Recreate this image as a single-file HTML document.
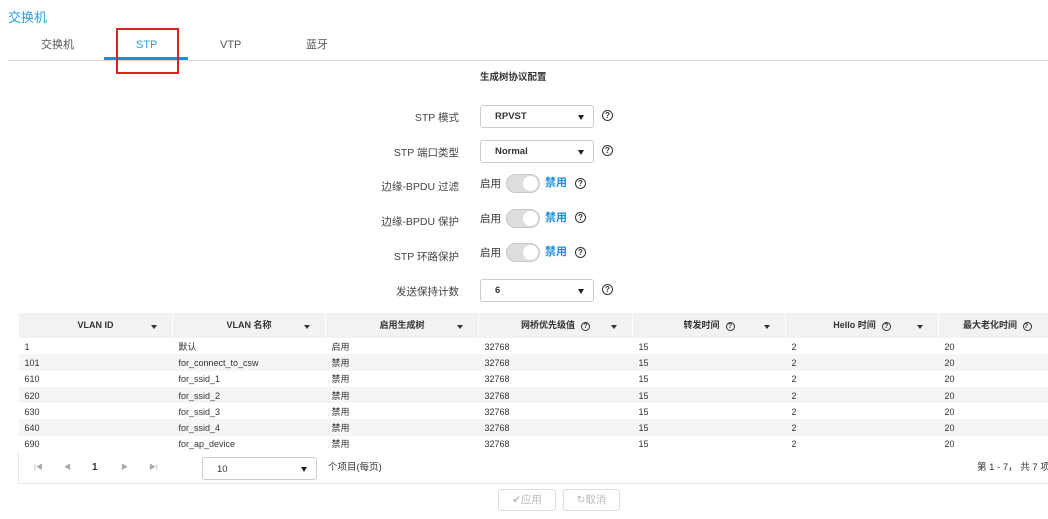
<!DOCTYPE html>
<html><head><meta charset="utf-8"><style>
*{margin:0;padding:0;box-sizing:border-box}
body{width:1048px;height:519px;overflow:hidden;background:#fff;font-family:"Liberation Sans","Noto Sans CJK SC",sans-serif;font-size:11px;line-height:1.2;color:#333;position:relative}
.a{position:absolute;white-space:nowrap}
.title{left:8px;top:10px;font-size:13px;color:#2d9fe0}
.tab{top:39px;font-size:11px;color:#555}
.line{left:8px;top:60px;width:1040px;height:1px;background:#ddd}
.lbl{right:589px;width:200px;text-align:right;font-size:10.5px;color:#444}
.sel{left:480px;width:114px;height:23px;border:1px solid #ccc;border-radius:3px;background:#fff;font-size:9.5px;font-weight:bold;padding:5px 0 0 14px;color:#333}
.sel:after{content:"";position:absolute;right:9px;top:9px;border-left:3px solid transparent;border-right:3px solid transparent;border-top:5px solid #222}
.q{width:11px;height:11px;border:1px solid #333;border-radius:50%;font-size:8px;line-height:9px;text-align:center;font-weight:bold;color:#333}
.tg{left:480px;font-size:10.5px;color:#333}
.sw{left:506px;width:34px;height:19px;border-radius:10px;background:#ddd;border:1px solid #c8c8c8}
.sw i{position:absolute;right:1px;top:1px;width:15px;height:15px;border-radius:50%;background:#fff}
.dis{left:545px;color:#1a8fdc;font-weight:bold;font-size:11px}
table{position:absolute;left:18px;top:313px;border-collapse:collapse;width:1040px;table-layout:fixed;font-size:9px;line-height:12px}
th{height:25px;background:#f2f2f2;font-weight:bold;border-left:1px solid #fff;position:relative;text-align:center;color:#333;vertical-align:top;padding-top:6px}
th .f{position:absolute;right:15px;top:12px;border-left:3px solid transparent;border-right:3px solid transparent;border-top:4px solid #333}
th .hq{display:inline-block;width:9px;height:9px;border:1px solid #333;border-radius:50%;font-size:7px;line-height:7px;margin-left:6px;vertical-align:0}
td{height:16.3px;padding:1px 0 0 6px;color:#333;vertical-align:middle;overflow:hidden}
tr:nth-child(even) td{background:#fff}
tr:nth-child(odd) td{background:#f5f5f5}
.foot{left:18px;top:453px;width:1040px;height:31px;border:1px solid #e6e6e6;border-top:none}
.btn{top:489px;height:22px;border:1px solid #ddd;border-radius:3px;color:#bbb;font-size:10.5px;text-align:center;padding-top:4px}
</style></head><body>
<div class="a title">交换机</div>
<div class="a tab" style="left:41px">交换机</div>
<div class="a tab" style="left:136px;color:#2d9fe0">STP</div>
<div class="a tab" style="left:220px">VTP</div>
<div class="a tab" style="left:306px">蓝牙</div>
<div class="a line"></div>
<div class="a" style="left:104px;top:57px;width:84px;height:3px;background:#1a8fdc"></div>
<div class="a" style="left:116px;top:28px;width:63px;height:46px;border:2px solid #e02020"></div>
<div class="a" style="left:480px;top:72px;font-weight:bold;font-size:9.5px">生成树协议配置</div>

<div class="a lbl" style="top:112px">STP 模式</div>
<div class="a sel" style="top:105px">RPVST</div><div class="a q" style="left:602px;top:110px">?</div>
<div class="a lbl" style="top:147px">STP 端口类型</div>
<div class="a sel" style="top:140px">Normal</div><div class="a q" style="left:602px;top:145px">?</div>
<div class="a lbl" style="top:181px">边缘-BPDU 过滤</div>
<div class="a tg" style="top:178px">启用</div><div class="a sw" style="top:174px"><i></i></div><div class="a dis" style="top:177px">禁用</div><div class="a q" style="left:575px;top:178px">?</div>
<div class="a lbl" style="top:216px">边缘-BPDU 保护</div>
<div class="a tg" style="top:213px">启用</div><div class="a sw" style="top:209px"><i></i></div><div class="a dis" style="top:212px">禁用</div><div class="a q" style="left:575px;top:212px">?</div>
<div class="a lbl" style="top:251px">STP 环路保护</div>
<div class="a tg" style="top:247px">启用</div><div class="a sw" style="top:243px"><i></i></div><div class="a dis" style="top:246px">禁用</div><div class="a q" style="left:575px;top:247px">?</div>
<div class="a lbl" style="top:286px">发送保持计数</div>
<div class="a sel" style="top:279px">6</div><div class="a q" style="left:602px;top:284px">?</div>

<table>
<colgroup><col style="width:154px"><col style="width:153px"><col style="width:153px"><col style="width:154px"><col style="width:153px"><col style="width:153px"><col style="width:120px"></colgroup>
<tr><th>VLAN ID<span class="f"></span></th><th>VLAN 名称<span class="f"></span></th><th>启用生成树<span class="f"></span></th><th>网桥优先级值<span class="hq">?</span><span class="f"></span></th><th>转发时间<span class="hq">?</span><span class="f"></span></th><th>Hello 时间<span class="hq">?</span><span class="f"></span></th><th style="text-align:left;padding-left:24px">最大老化时间<span class="hq">?</span></th></tr>
<tr><td>1</td><td>默认</td><td>启用</td><td>32768</td><td>15</td><td>2</td><td>20</td></tr>
<tr><td>101</td><td>for_connect_to_csw</td><td>禁用</td><td>32768</td><td>15</td><td>2</td><td>20</td></tr>
<tr><td>610</td><td>for_ssid_1</td><td>禁用</td><td>32768</td><td>15</td><td>2</td><td>20</td></tr>
<tr><td>620</td><td>for_ssid_2</td><td>禁用</td><td>32768</td><td>15</td><td>2</td><td>20</td></tr>
<tr><td>630</td><td>for_ssid_3</td><td>禁用</td><td>32768</td><td>15</td><td>2</td><td>20</td></tr>
<tr><td>640</td><td>for_ssid_4</td><td>禁用</td><td>32768</td><td>15</td><td>2</td><td>20</td></tr>
<tr><td>690</td><td>for_ap_device</td><td>禁用</td><td>32768</td><td>15</td><td>2</td><td>20</td></tr>
</table>
<div class="a foot"></div>
<div class="a" style="left:34px;top:464px;font-size:7px;color:#aaa">|◀</div>
<div class="a" style="left:64px;top:464px;font-size:7px;color:#aaa">◀</div>
<div class="a" style="left:92px;top:462px;font-size:10px;font-weight:bold">1</div>
<div class="a" style="left:121px;top:464px;font-size:7px;color:#aaa">▶</div>
<div class="a" style="left:149px;top:464px;font-size:7px;color:#aaa">▶|</div>
<div class="a sel" style="left:202px;top:457px;width:115px;font-weight:normal;padding-top:6px">10</div>
<div class="a" style="left:328px;top:462px;font-size:9.5px">个项目(每页)</div>
<div class="a" style="left:977px;top:462px;font-size:9.5px">第 1 - 7， 共 7 项</div>
<div class="a btn" style="left:498px;width:58px">✔应用</div>
<div class="a btn" style="left:563px;width:57px">↻取消</div>
</body></html>
